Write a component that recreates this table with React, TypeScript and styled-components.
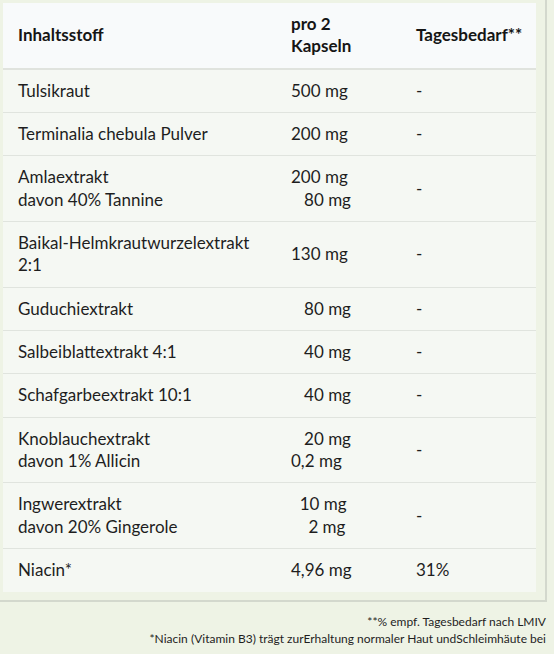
import React from "react";
import styled, { createGlobalStyle } from "styled-components";

const Global = createGlobalStyle`
  html, body { margin: 0; padding: 0; }
  body {
    background: #eef3e5;
    font-family: Lato, "Open Sans", Arial, sans-serif;
    color: #1e1e1e;
  }
`;

const Page = styled.div`
  width: 554px;
  box-sizing: border-box;
`;

const Panel = styled.div`
  margin-right: 7px;
  padding: 3px 9px 8px 3px;
  border-right: 2px solid #d3d8cd;
  border-bottom: 2px solid #d3d8cd;
`;

const Table = styled.table`
  width: 533px;
  border-collapse: collapse;
  table-layout: fixed;
  font-size: 17px;
  line-height: 22.35px;
`;

const HeadRow = styled.tr`
  background: #f8fafb;
  border-bottom: 2px solid #e0e3de;
`;

const Row = styled.tr<{ $last?: boolean }>`
  background: #f5f8f3;
  border-bottom: ${(p) => (p.$last ? "none" : "1px solid #e0e4de")};
`;

const Th = styled.th`
  text-align: left;
  font-weight: 700;
  font-size: 17px;
  padding: 10px 15px;
  vertical-align: middle;
  color: #151515;
`;

const Td = styled.td`
  padding: 10px 15px;
  vertical-align: middle;
  white-space: pre-wrap;
`;

type Item = { name: string; amount: string; daily: string };

const rows: Item[] = [
  { name: "Tulsikraut", amount: "500 mg", daily: "-" },
  { name: "Terminalia chebula Pulver", amount: "200 mg", daily: "-" },
  { name: "Amlaextrakt\ndavon 40% Tannine", amount: "200 mg\n\u00a0\u00a0\u00a080 mg", daily: "-" },
  { name: "Baikal-Helmkrautwurzelextrakt 2:1", amount: "130 mg", daily: "-" },
  { name: "Guduchiextrakt", amount: "\u00a0\u00a0\u00a080 mg", daily: "-" },
  { name: "Salbeiblattextrakt 4:1", amount: "\u00a0\u00a0\u00a040 mg", daily: "-" },
  { name: "Schafgarbeextrakt 10:1", amount: "\u00a0\u00a0\u00a040 mg", daily: "-" },
  { name: "Knoblauchextrakt\ndavon 1% Allicin", amount: "\u00a0\u00a0\u00a020 mg\n0,2 mg", daily: "-" },
  { name: "Ingwerextrakt\ndavon 20% Gingerole", amount: "\u00a0\u00a010 mg\n\u00a0\u00a0\u00a0\u00a02 mg", daily: "-" },
  { name: "Niacin*", amount: "4,96 mg", daily: "31%" },
];

const Footer = styled.div`
  margin-right: 8px;
  padding-top: 11px;
  text-align: right;
  font-size: 12px;
  line-height: 17px;
  color: #1e1e1e;
`;

export default function App() {
  return (
    <Page>
      <Global />
      <Panel>
        <Table>
          <colgroup>
            <col style={{ width: 273 }} />
            <col style={{ width: 125 }} />
            <col style={{ width: 135 }} />
          </colgroup>
          <thead>
            <HeadRow>
              <Th>Inhaltsstoff</Th>
              <Th>
                pro 2
                <br />
                Kapseln
              </Th>
              <Th>Tagesbedarf**</Th>
            </HeadRow>
          </thead>
          <tbody>
            {rows.map((r, i) => (
              <Row key={i} $last={i === rows.length - 1}>
                <Td>{r.name}</Td>
                <Td>{r.amount}</Td>
                <Td>{r.daily}</Td>
              </Row>
            ))}
          </tbody>
        </Table>
      </Panel>
      <Footer>
        **% empf. Tagesbedarf nach LMIV
        <br />
        *Niacin (Vitamin B3) trägt zurErhaltung normaler Haut undSchleimhäute bei
      </Footer>
    </Page>
  );
}
